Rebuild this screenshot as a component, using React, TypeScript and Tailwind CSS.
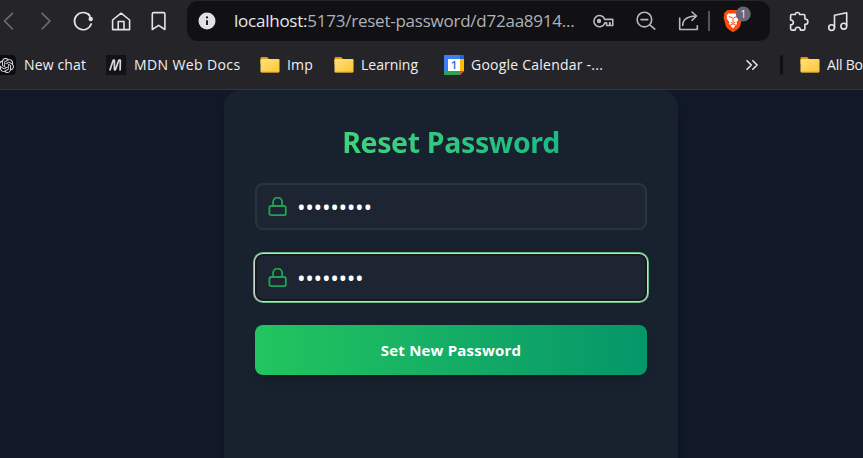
import type { ReactNode } from "react";
import { SiOpenai } from "react-icons/si";

function Glyph({ box, className, children }: { box: string; className: string; children: ReactNode }) {
  return (
    <svg viewBox={box} className={`shrink-0 ${className}`} fill="none" stroke="currentColor" strokeWidth="1.6" strokeLinecap="round" strokeLinejoin="round">
      {children}
    </svg>
  );
}

function Folder({ className = "" }: { className?: string }) {
  return (
    <svg viewBox="0 0 20 20" className={`h-5 w-5 shrink-0 ${className}`}>
      <defs>
        <linearGradient id="folder" x1="0" y1="0" x2="1" y2="1">
          <stop offset="0" stopColor="#ffe07a" />
          <stop offset="1" stopColor="#fcc637" />
        </linearGradient>
      </defs>
      <path d="M.5 3.2q0-1.2 1.2-1.2h5.5l1.8 2h9.5v5H.5z" fill="#dc9a0c" />
      <rect x=".5" y="4" width="19" height="13.4" rx="1.2" fill="url(#folder)" />
      <path d="M1.2 17.2h17.6" stroke="#c8941c" strokeWidth=".8" />
    </svg>
  );
}

function Label({ className, children }: { className: string; children: ReactNode }) {
  return <span className={`shrink-0 overflow-visible whitespace-nowrap text-[14px] leading-5 text-[#f0f0f2] ${className}`}>{children}</span>;
}

function Toolbar() {
  return (
    <div className="flex h-[42px] items-start text-[#e4e4e6]">
      <Glyph box="0 0 20 42" className="h-[42px] w-5 text-[#707074]"><path d="M12.5 13.3 4.5 21l8 8" /></Glyph>
      <Glyph box="36 0 20 42" className="ml-4 h-[42px] w-5 text-[#707074]"><path d="m42 13.3 8 7.7-8 8" /></Glyph>
      <Glyph box="70 0 26 42" className="ml-3.5 h-[42px] w-[26px]">
        <path d="M89.7 15.6A8.6 8.6 0 1 0 91.2 24" strokeWidth="1.7" />
        <circle cx="90.7" cy="19" r="2.2" fill="currentColor" stroke="none" />
        <path d="m88.5 13.8 2.2 5" />
      </Glyph>
      <Glyph box="108 0 26 42" className="ml-3 h-[42px] w-[26px]">
        <path d="m112.6 20 8.5-6.8 8.5 6.8v9.6h-17zM118.2 29.5v-8h5.8v8" />
      </Glyph>
      <Glyph box="148 0 22 42" className="ml-3.5 h-[42px] w-[22px]">
        <path d="M152.3 14q0-1.4 1.4-1.4h9.8q1.4 0 1.4 1.4v15.5l-6.3-4.2-6.3 4.2z" />
      </Glyph>
      <div className="ml-[17px] mt-px flex h-10 w-[583px] shrink-0 items-center rounded-[11px] bg-[#111113] text-[#b9b9bd]">
        <Glyph box="0 0 18 18" className="ml-[11px] h-[18px] w-[18px]">
          <circle cx="9" cy="9" r="8.5" fill="#e2e2e6" stroke="none" />
          <path d="M9 8.3v4.8" stroke="#222226" strokeWidth="2" strokeLinecap="butt" />
          <circle cx="9" cy="5.4" r="1.15" fill="#222226" stroke="none" />
        </Glyph>
        <span className="ml-[18px] w-[357px] shrink-0 whitespace-nowrap font-['Open_Sans','Noto_Sans',sans-serif] text-[17px] leading-10 tracking-[-0.24px] text-[#aeb2ba]">
          <span className="text-[#e5e7eb]">localhost:</span>5173/reset-password/d72aa8914...
        </span>
        <Glyph box="592 1 24 40" className="ml-px h-10 w-6">
          <path d="M604.8 19.4a5.6 5.6 0 1 0 0 3.5h1.8v2.6h3v-2.6h.5v2.6h2.7v-6.1z" strokeWidth="1.6" />
          <circle cx="599" cy="21" r="2.2" fill="currentColor" stroke="none" />
        </Glyph>
        <Glyph box="632 1 26 40" className="ml-4 h-10 w-[26px]">
          <circle cx="644.4" cy="19.6" r="7.3" /><path d="m649.8 24.8 5 4.3M641 19.6h6.8" />
        </Glyph>
        <Glyph box="675 1 28 40" className="ml-[17px] h-10 w-7">
          <path d="M679.7 18v11.5h17.6v-3.7M682.7 25.5q0-9 13.5-9.5M692 12l4.5 4-4.5 4.3" />
        </Glyph>
        <div className="ml-[5px] h-5 w-0.5 bg-[#55555a]" />
        <Glyph box="720 1 32 40" className="ml-[10px] h-10 w-8">
          <path d="m727 10.3 2-.3h8l2.3.4 2.8 3-.5 2 .8 2-2.4 9.2-2 2.3-5 3.3-5-3.3-2-2.3-2.5-9.2.8-2-.5-2z" fill="#fb4c0b" stroke="none" />
          <path d="m728.2 13.2 3 .5 1.8-.4 1.8.4 3-.5 1.7 2.6-.6 1.2.4 1.5-2.8 3.8.6 1.7-1.8 1.5-.9 1.8-1.4.9-1.4-.9-.9-1.8-1.8-1.5.6-1.7-2.8-3.8.4-1.5-.6-1.2z" fill="#fff" stroke="none" />
          <path d="m729.2 16.6 2.7 1M736.8 16.6l-2.7 1M733 18v3.8M731.2 22.4l1.8 1 1.8-1M730.6 25l2.4-1.2 2.4 1.2" stroke="#fb4c0b" strokeWidth="1" />
          <circle cx="743.3" cy="14" r="7.5" fill="#656776" stroke="none" />
          <text x="743.4" y="17.6" textAnchor="middle" fill="#f4f4f6" stroke="none" fontSize="10" fontFamily="Open Sans, sans-serif">1</text>
        </Glyph>
      </div>
      <Glyph box="786 0 26 42" className="ml-4 h-[42px] w-[26px]">
        <path d="M791.2 14.5h4.2q-.3-2 2-2t2.2 2h4q1.3 0 1.3 1.3v3.2q3 0 3 2.7t-3 2.7v4.4q0 1.3-1.3 1.3h-3.2q0-2.8-2.6-2.8t-2.6 2.8h-3.2q-1.4 0-1.4-1.3v-4q2.8-.2 2.8-2.4t-2.8-2.4v-4.2q0-1.3 1.4-1.3z" />
      </Glyph>
      <Glyph box="824 0 28 42" className="ml-3 h-[42px] w-7">
        <path d="M834.5 27.5V15.3l12.2-2.5v12.7" /><circle cx="831.6" cy="27.6" r="2.9" /><circle cx="843.8" cy="26.2" r="2.9" />
      </Glyph>
    </div>
  );
}

function Bookmarks() {
  return (
    <div className="flex h-[46px] items-center font-['Open_Sans','Noto_Sans',sans-serif]">
      <div className="-ml-1 flex h-5 w-5 shrink-0 items-center justify-center rounded bg-[#0c0c0e] text-[#e4e4e6]">
        <SiOpenai size={15} />
      </div>
      <Label className="ml-2 w-[62px] tracking-[0.15px]">New chat</Label>
      <svg viewBox="0 0 20 20" className="ml-5 h-5 w-5 shrink-0" fill="none" stroke="#dadade" strokeWidth="1.7" strokeLinejoin="bevel">
        <rect width="20" height="20" fill="#131317" stroke="none" />
        <path d="M3.8 15.6 7.2 5.2h1.2v9.6h1L12.8 5.2h1.6l-.3 10.4" />
      </svg>
      <Label className="ml-2 w-[106px] tracking-[0.38px]">MDN Web Docs</Label>
      <Folder className="ml-5" />
      <Label className="ml-[7px] w-[27px] tracking-[0.2px]">Imp</Label>
      <Folder className="ml-5" />
      <Label className="ml-[7px] w-[57px]">Learning</Label>
      <svg viewBox="0 0 20 20" className="ml-[26px] h-5 w-5 shrink-0">
        <path d="M0 1q0-1 1-1h18q1 0 1 1v15l-4 4H1q-1 0-1-1z" fill="#3d7ff0" />
        <path d="M16 4h4v12h-4z" fill="#fdbd05" /><path d="M0 16h16v4H1q-1 0-1-1z" fill="#2fa250" /><path d="M16 16h4l-4 4z" fill="#e84336" />
        <path d="M16 0h3q1 0 1 1v3h-4z" fill="#1967d2" /><path d="M4 4h12v12H4z" fill="#fff" />
        <text x="10" y="14.2" textAnchor="middle" fill="#2f70d8" fontFamily="Open Sans, sans-serif" fontSize="11.5" fontWeight="600">1</text>
      </svg>
      <Label className="ml-[7px] w-[133px] tracking-[0.23px]">Google Calendar -...</Label>
      <Glyph box="0 0 14 14" className="ml-[141px] h-3.5 w-3.5 text-[#e8e8ea]"><path d="m2 2.8 4.3 4.2L2 11.2M7.8 2.8l4.3 4.2-4.3 4.2" /></Glyph>
      <div className="ml-[21px] h-5 w-[3px] shrink-0 rounded-sm bg-[#111113]" />
      <Folder className="ml-[17px]" />
      <Label className="ml-[7px] tracking-[-0.2px]">All Bo</Label>
    </div>
  );
}

function PasswordField({ dots, focused = false }: { dots: string; focused?: boolean }) {
  const frame = focused
    ? "border-[#17191c] shadow-[0_0_0_1px_#cfd8d0,0_0_0_2px_#65bd85]"
    : "border-[#2a3341]";
  return (
    <div className={`flex h-[47px] items-center rounded-lg border-2 bg-[#1d2532] ${frame}`}>
      <Glyph box="0 0 20 20" className="ml-[11px] h-5 w-5 text-[#1fa352]">
        <rect x="1.4" y="9" width="16.4" height="9.2" rx="1.7" strokeWidth="1.8" /><path d="M5.1 9V5a4.5 4.5 0 0 1 9 0V9" strokeWidth="1.8" />
      </Glyph>
      <span className="ml-[9px] font-['Open_Sans',sans-serif] text-[23px] leading-5 tracking-[-0.35px] text-white">{dots}</span>
    </div>
  );
}

export default function App() {
  return (
    <div className="flex h-[458px] w-[863px] flex-col overflow-hidden bg-[#111827]">
      <header className="h-[90px] shrink-0 border-b border-[#363638] bg-[#252529]">
        <Toolbar />
        <Bookmarks />
      </header>
      <main className="flex flex-1 overflow-hidden pl-[224px]">
        <section className="h-[440px] w-[454px] rounded-t-[17px] bg-[#18212e] px-[31px] shadow-[0_10px_10px_rgba(0,0,0,0.22)]">
          <h1 className="pt-8 text-center font-['Noto_Sans','Open_Sans',sans-serif] text-[28.5px] leading-10 tracking-[-0.35px] font-bold">
            <span className="bg-linear-to-r from-[#3fd47b] to-[#1bb984] bg-clip-text text-transparent">Reset Password</span>
          </h1>
          <div className="mt-[21px]"><PasswordField dots="•••••••••" /></div>
          <div className="mt-6"><PasswordField dots="••••••••" focused /></div>
          <button className="mt-6 h-[50px] w-full rounded-lg bg-linear-to-r from-[#22c55e] to-[#059669] font-['Open_Sans',sans-serif] text-[15px] tracking-[0.2px] font-bold text-white shadow-[0_8px_12px_-3px_rgba(0,0,0,0.18)]">
            Set New Password
          </button>
        </section>
      </main>
    </div>
  );
}
